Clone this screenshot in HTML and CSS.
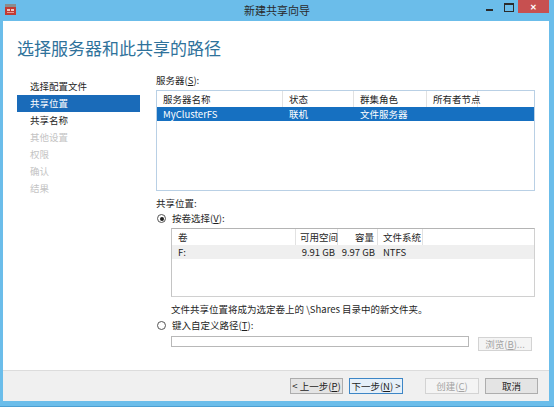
FILE: index.html
```html
<!DOCTYPE html>
<html lang="zh-CN">
<head>
    <meta charset="UTF-8">
    <title>新建共享向导</title>
    <link rel="stylesheet" href="styles.css">
</head>
<body>
    <div class="window">
        <div class="titlebar">
            <svg class="app-icon" width="11" height="11" viewBox="0 0 11 11">
                <rect x="0" y="0" width="11" height="3" fill="#8c8c8c"/>
                <rect x="0" y="3" width="11" height="8" fill="#c23b32"/>
                <rect x="2" y="5" width="3" height="2" fill="#f2c6c2"/>
                <rect x="6" y="5" width="3" height="2" fill="#f2c6c2"/>
                <rect x="2" y="8" width="7" height="1" fill="#e69a94"/>
            </svg>
            <div class="title">新建共享向导</div>
            <div class="controls">
                <span class="ctl min"></span>
                <span class="ctl max"></span>
                <span class="ctl close">✕</span>
            </div>
        </div>

        <div class="client">
            <div class="content">
                <h1>选择服务器和此共享的路径</h1>
                <div class="layout">
                    <ul class="steps">
                        <li>选择配置文件</li>
                        <li class="active">共享位置</li>
                        <li>共享名称</li>
                        <li class="off">其他设置</li>
                        <li class="off">权限</li>
                        <li class="off">确认</li>
                        <li class="off">结果</li>
                    </ul>

                    <div class="main">
                        <div class="label">服务器(<u>S</u>):</div>
                        <div class="listbox servers">
                            <div class="row head">
                                <span class="s1">服务器名称</span>
                                <span class="s2">状态</span>
                                <span class="s3">群集角色</span>
                                <span class="s4">所有者节点</span>
                            </div>
                            <div class="row sel">
                                <span class="s1">MyClusterFS</span>
                                <span class="s2">联机</span>
                                <span class="s3">文件服务器</span>
                                <span class="s4"></span>
                            </div>
                        </div>

                        <div class="label gap">共享位置:</div>
                        <div class="radio first"><span class="dot on"></span>按卷选择(<u>V</u>):</div>
                        <div class="listbox volumes">
                            <div class="row head">
                                <span class="v1">卷</span>
                                <span class="v2">可用空间</span>
                                <span class="v3 num">容量</span>
                                <span class="v4">文件系统</span>
                            </div>
                            <div class="row grey">
                                <span class="v1">F:</span>
                                <span class="v2 num">9.91 GB</span>
                                <span class="v3 num">9.97 GB</span>
                                <span class="v4">NTFS</span>
                            </div>
                        </div>
                        <div class="note">文件共享位置将成为选定卷上的 \Shares 目录中的新文件夹。</div>
                        <div class="radio second"><span class="dot"></span>键入自定义路径(<u>T</u>):</div>
                        <div class="pathrow">
                            <div class="input"></div>
                            <div class="btn browse disabled">浏览(<u>B</u>)...</div>
                        </div>
                    </div>
                </div>
            </div>

            <div class="footer">
                <div class="btn prev">&lt; 上一步(<u>P</u>)</div>
                <div class="btn next">下一步(<u>N</u>) &gt;</div>
                <div class="btn create disabled">创建(<u>C</u>)</div>
                <div class="btn cancel">取消</div>
            </div>
        </div>
    </div>
</body>
</html>
```

FILE: styles.css
```css
body {
    margin: 0;
    font-family: "Noto Sans CJK SC", "Noto Sans", sans-serif;
    font-size: 9.5px;
    color: #1e1e1e;
}

.window {
    width: 554px;
    height: 407px;
    background-color: #6bbdea;
    border-bottom: 1px solid #4c9fd2;
    box-sizing: border-box;
    display: flex;
    flex-direction: column;
}

/* title bar */
.titlebar {
    height: 21px;
    display: grid;
    grid-template-columns: 1fr auto 1fr;
}

.app-icon {
    margin: 4px 0 0 5px;
}

.title {
    line-height: 20px;
    font-size: 11px;
    color: #2a2a2a;
}

.controls {
    justify-self: end;
    display: flex;
    align-items: flex-start;
    margin-right: 5px;
}

.ctl.min {
    width: 7px;
    height: 2px;
    background-color: #2b2b2b;
    margin: 9px 11px 0 0;
}

.ctl.max {
    width: 8px;
    height: 6px;
    border: 1px solid #2b2b2b;
    border-top-width: 2px;
    margin: 3px 4px 0 0;
}

.ctl.close {
    width: 31px;
    height: 13px;
    background-color: #c75050;
    color: #fff;
    font-size: 8px;
    font-weight: bold;
    line-height: 13px;
    text-align: center;
}

/* client area */
.client {
    height: 380px;
    margin: 0 5px 0 3px;
    display: flex;
    flex-direction: column;
}

.content {
    flex: 1;
    background-color: #fff;
    padding: 16px 0 0 14px;
}

h1 {
    margin: 0;
    font-size: 17px;
    font-weight: normal;
    line-height: 22px;
    color: #2f729b;
}

.layout {
    display: flex;
    margin-top: 15px;
}

.steps {
    list-style: none;
    margin: 4px 16px 0 0;
    padding: 0;
    width: 123px;
}

.steps li {
    height: 17px;
    line-height: 17px;
    padding-left: 13px;
}

.steps li.active {
    background-color: #1a6bb9;
    color: #fff;
}

.steps li.off {
    color: #c4c4c4;
}

.main {
    width: 379px;
}

.label {
    line-height: 13px;
}

.label.gap {
    margin-top: 6px;
}

/* list views */
.listbox {
    box-sizing: border-box;
    border: 1px solid #b9d0e5;
    background-color: #fff;
}

.servers {
    margin-top: 3px;
    height: 101px;
}

.volumes {
    margin: 3px 0 0 15px;
    height: 69px;
    border-color: #b4b4b4 #d0d0d0 #d0d0d0 #c4c4c4;
}

.row {
    display: flex;
    height: 14px;
    line-height: 14px;
    white-space: nowrap;
}

.row span {
    box-sizing: border-box;
    padding-left: 6px;
}

.row.head {
    height: 16px;
    line-height: 16px;
}

.row.head span {
    border-right: 1px solid #e2e2e2;
}

.row.sel {
    background-color: #1670c1;
    color: #fff;
}

.row.grey {
    background-color: #efefef;
}

.s1 { width: 126px; }
.s2 { width: 71px; }
.s3 { width: 73px; }
.s4 { width: 51px; }

.v1 { width: 124px; }
.v2 { width: 42px; padding-left: 4px !important; }
.v3 { width: 40px; }
.v4 { width: 45px; padding-left: 5px !important; }

.row span.num {
    text-align: right;
    padding-left: 0;
    padding-right: 3px;
}

.note {
    margin: 6px 0 0 15px;
    line-height: 13px;
}

/* radios */
.radio {
    display: flex;
    align-items: center;
    line-height: 13px;
}

.radio.first {
    margin-top: 2px;
}

.radio.second {
    margin-top: 3px;
}

.dot {
    width: 9px;
    height: 9px;
    box-sizing: border-box;
    border: 1px solid #555;
    border-radius: 50%;
    margin: 0 6px 0 1px;
    display: flex;
    align-items: center;
    justify-content: center;
}

.dot.on::after {
    content: "";
    width: 4px;
    height: 4px;
    border-radius: 50%;
    background-color: #1e1e1e;
}

.pathrow {
    display: flex;
    align-items: flex-start;
    margin: 4px 0 0 15px;
}

.input {
    width: 298px;
    height: 11px;
    box-sizing: border-box;
    border: 1px solid #b8b8b8;
}

/* buttons */
.btn {
    height: 16px;
    box-sizing: border-box;
    border: 1px solid #adadad;
    background-color: #e4e4e4;
    line-height: 14px;
    text-align: center;
    white-space: nowrap;
}

.btn.disabled {
    border-color: #d3d3d3;
    background-color: #f4f4f4;
    color: #a3a3a3;
}

.browse {
    width: 54px;
    height: 14px;
    line-height: 12px;
    margin: 1px 0 0 9px;
}

.footer {
    height: 31px;
    box-sizing: border-box;
    border-top: 1px solid #dcdcdc;
    background-color: #f0f0f0;
    display: flex;
    justify-content: flex-end;
    align-items: flex-start;
    padding: 7px 11px 0 0;
}

.prev { width: 53px; margin-right: 6px; }
.next {
    width: 54px;
    margin-right: 22px;
    border-color: #3d86c6;
    background-color: #e6f0f9;
}
.create { width: 54px; margin-right: 6px; }
.cancel { width: 53px; }
```
